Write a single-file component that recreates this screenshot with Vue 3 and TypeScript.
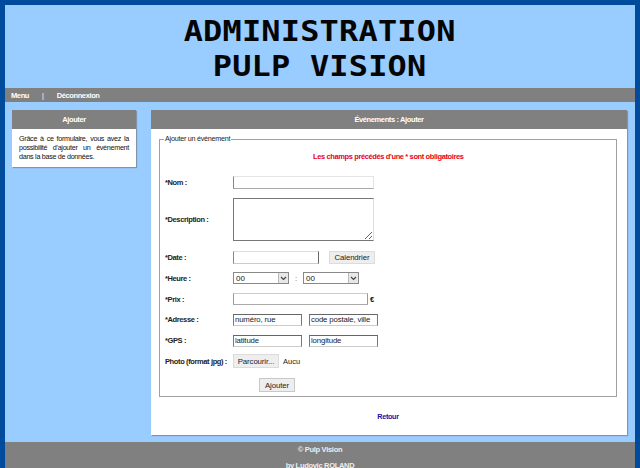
<script setup lang="ts">
const hours = ['00']
</script>

<template>
  <div class="page">
    <header class="banner">
      <h1>ADMINISTRATION<br />PULP VISION</h1>
    </header>
    <nav class="topnav">
      <a>Menu</a>
      <span class="sep">|</span>
      <a>Déconnexion</a>
    </nav>

    <div class="columns">
      <aside class="box side">
        <div class="box-head">Ajouter</div>
        <p>Grâce à ce formulaire, vous avez la possibilité d'ajouter un événement dans la base de données.</p>
      </aside>

      <main class="box content">
        <div class="box-head">Événements : Ajouter</div>
        <div class="content-body">
          <fieldset>
            <legend>Ajouter un événement</legend>
            <p class="required">Les champs précédés d'une * sont obligatoires</p>
            <div class="form">
              <div class="row row-nom">
                <label>*Nom :</label>
                <input class="field w-full" type="text" />
              </div>
              <div class="row row-desc">
                <label>*Description :</label>
                <textarea class="field area"></textarea>
              </div>
              <div class="row row-date">
                <label>*Date :</label>
                <input class="field w-date" type="text" />
                <button class="btn cal" type="button">Calendrier</button>
              </div>
              <div class="row row-heure">
                <label>*Heure :</label>
                <div class="select s1"><span>{{ hours[0] }}</span><i><svg width="7" height="5" viewBox="0 0 7 5"><path d="M1 1l2.5 2.5L6 1" fill="none" stroke="#444" stroke-width="1.2" /></svg></i></div>
                <span class="colon">:</span>
                <div class="select s2"><span>00</span><i><svg width="7" height="5" viewBox="0 0 7 5"><path d="M1 1l2.5 2.5L6 1" fill="none" stroke="#444" stroke-width="1.2" /></svg></i></div>
              </div>
              <div class="row row-prix">
                <label>*Prix :</label>
                <input class="field w-prix" type="text" />
                <span class="euro">€</span>
              </div>
              <div class="row row-adr">
                <label>*Adresse :</label>
                <input class="field w-half" type="text" value="numéro, rue" />
                <input class="field w-half second" type="text" value="code postale, ville" />
              </div>
              <div class="row row-gps">
                <label>*GPS :</label>
                <input class="field w-half" type="text" value="latitude" />
                <input class="field w-half second" type="text" value="longitude" />
              </div>
              <div class="row row-photo">
                <label>Photo (format jpg) :</label>
                <button class="btn browse" type="button">Parcourir...</button>
                <span class="none">Aucu</span>
              </div>
              <div class="submit">
                <button class="btn add" type="button">Ajouter</button>
              </div>
            </div>
          </fieldset>
          <a class="back">Retour</a>
        </div>
      </main>
    </div>

    <footer class="foot">
      <p>© Pulp Vision</p>
      <p>by Ludovic ROLAND</p>
    </footer>
  </div>
</template>

<style>
html,
body {
  margin: 0;
  height: 468px;
  overflow: hidden;
}
</style>

<style scoped>
.page {
  box-sizing: border-box;
  width: 640px;
  height: 468px;
  overflow: hidden;
  background: #99ccff;
  border: 5px solid #004b9b;
  border-bottom: 0;
  font-family: 'Liberation Sans', Arial, sans-serif;
  font-size: 7.5px;
  color: #111;
}

.banner {
  height: 83px;
  text-align: center;
}

.banner h1 {
  display: inline-block;
  margin: 0;
  padding-top: 9px;
  font-family: 'DejaVu Sans Mono', monospace;
  font-weight: 700;
  font-size: 29px;
  line-height: 35px;
  letter-spacing: 0.2px;
  color: #050505;
  transform: scaleX(1.1);
}

.topnav {
  display: flex;
  align-items: center;
  height: 14px;
  padding-left: 6px;
  background: #808080;
  color: #fff;
  font-weight: 700;
  font-size: 7.5px;
  letter-spacing: -0.38px;
}

.sep {
  margin: 0 13px;
  font-weight: 400;
}

.columns {
  display: flex;
  align-items: flex-start;
  gap: 15px;
  padding: 8px 8px 8px 7px;
}

.box {
  background: #fff;
  box-shadow: 1px 1px 1px #8294a8;
}

.box-head {
  height: 19px;
  line-height: 19px;
  background: #808080;
  color: #fff;
  font-weight: 700;
  font-size: 7.5px;
  letter-spacing: -0.38px;
  text-align: center;
}

.side {
  width: 124px;
  height: 57px;
  flex: none;
}

.side p {
  margin: 0;
  padding: 5px 7px 0;
  font-size: 7.2px;
  letter-spacing: -0.3px;
  line-height: 9px;
  text-align: justify;
}

.content {
  width: 476px;
  height: 325px;
  flex: none;
}

.content-body {
  padding: 5px 10px 0 8px;
}

fieldset {
  box-sizing: border-box;
  height: 263px;
  margin: 0;
  padding: 0 0 0 5px;
  border: 1px solid #a0a0a0;
}

legend {
  padding: 0 1px;
  margin-left: -1px;
  font-size: 7.2px;
  letter-spacing: -0.25px;
  line-height: 10px;
  color: #222;
}

.required {
  margin: 8px 0 0;
  padding-left: 148px;
  height: 10px;
  line-height: 10px;
  color: #e8001c;
  font-weight: 700;
  font-size: 7.5px;
  letter-spacing: -0.38px;
}

.form {
  padding-top: 13px;
}

.row {
  display: flex;
  align-items: center;
}

.row label {
  width: 68px;
  flex: none;
  white-space: nowrap;
  font-weight: 700;
  font-size: 7.5px;
  letter-spacing: -0.38px;
  color: #222;
}

.row-nom {
  height: 14px;
}

.row-desc {
  height: 44px;
  margin-top: 8px;
}

.row-date {
  height: 14px;
  margin-top: 9px;
}

.row-heure {
  height: 14px;
  margin-top: 7px;
}

.row-prix {
  height: 12px;
  margin-top: 8px;
}

.row-adr {
  height: 13px;
  margin-top: 8px;
}

.row-gps {
  height: 13px;
  margin-top: 8px;
}

.row-photo {
  height: 14px;
  margin-top: 7px;
}

.field {
  box-sizing: border-box;
  margin: 0;
  padding: 0 1px;
  background: #fff;
  border: 1px solid #777;
  border-radius: 0;
  outline: none;
  font-family: inherit;
  font-size: 7.8px;
  letter-spacing: -0.15px;
  color: #222;
}

.w-full {
  width: 141px;
  height: 13px;
  border-color: #e4e4e4 #e4e4e4 #aaa #888;
}

.area {
  width: 141px;
  height: 43px;
  resize: both;
  border-right-color: #ddd;
}

.w-date {
  width: 86px;
  height: 13px;
  border-color: #ddd #666 #ccc #888;
}

.w-prix {
  width: 135px;
  height: 12px;
  border-color: #ccc #999 #aaa #999;
}

.w-half {
  width: 69px;
  height: 12px;
  border-color: #666 #777 #ccc #777;
}

.second {
  margin-left: 7px;
}

.btn {
  box-sizing: border-box;
  margin: 0;
  padding: 0;
  background: #eeeeee;
  border: 1px solid #dcdcdc;
  border-radius: 0;
  font-family: inherit;
  font-size: 7.8px;
  letter-spacing: -0.1px;
  color: #222;
}

.cal {
  width: 46px;
  height: 13px;
  margin-left: 10px;
}

.select {
  box-sizing: border-box;
  display: flex;
  align-items: center;
  justify-content: space-between;
  height: 12px;
  padding-left: 2px;
  background: #fff;
  border: 1px solid #888;
  font-size: 8px;
  color: #222;
}

.select i {
  display: flex;
  align-items: center;
  justify-content: center;
  width: 9px;
  height: 10px;
  background: #e8e8e8;
  border-left: 1px solid #bbb;
}

.s1 {
  width: 56px;
}

.s2 {
  width: 56px;
}

.colon {
  width: 14px;
  text-align: center;
  color: #555;
}

.euro {
  margin-left: 2px;
  font-weight: 700;
  font-size: 7.5px;
}

.browse {
  width: 46px;
  height: 14px;
}

.none {
  margin-left: 4px;
  color: #222;
}

.submit {
  margin-top: 10px;
  padding-left: 94px;
}

.add {
  display: block;
  width: 36px;
  height: 14px;
  border-color: #c8c8c8;
}

.back {
  display: block;
  margin-top: 15px;
  text-align: center;
  color: #2010a8;
  font-weight: 700;
  font-size: 7.2px;
  letter-spacing: -0.3px;
  line-height: 10px;
}

.foot {
  height: 40px;
  margin-top: -1px;
  background: #808080;
  color: #eee;
  text-align: center;
  font-weight: 700;
  font-size: 7.5px;
  letter-spacing: -0.3px;
}

.foot p {
  margin: 0;
  line-height: 16px;
}
</style>
